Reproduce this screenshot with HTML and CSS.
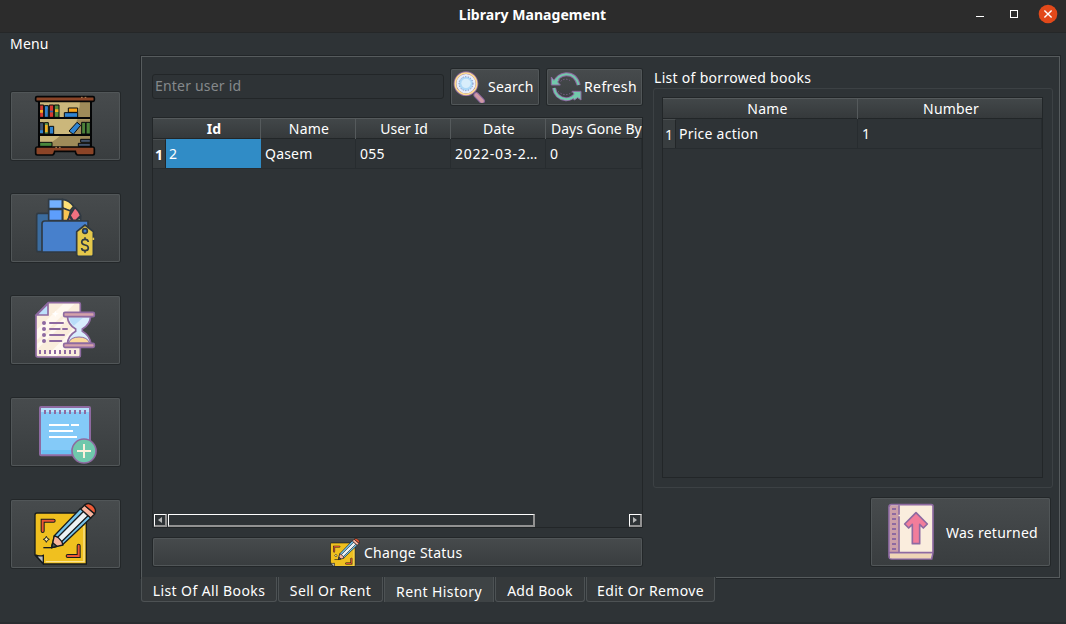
FILE: index.html
```html
<!DOCTYPE html>
<html lang="en">
<head>
<meta charset="utf-8">
<title>Library Management</title>
<link rel="stylesheet" href="styles.css">
</head>
<body>
<header class="titlebar">
  <h1 class="title">Library Management</h1>
  <div class="window-controls">
    <svg width="88" height="33" viewBox="0 0 88 33">
      <path d="M4 16.5h8" stroke="#fff"/>
      <rect x="38.5" y="10.500" width="7" height="7" fill="none" stroke="#fff"/>
      <circle cx="76" cy="14" r="9.300" fill="#e2491a"/>
      <path d="M72.400 10.400l7.200 7.200m0-7.200l-7.200 7.200" stroke="#fff" stroke-width="1.400"/>
    </svg>
  </div>
</header>
<div class="content">
  <aside class="sidebar">
    <div class="menu-label"><span class="t-menu">Menu</span></div>
    <nav class="menu">
      <button class="btn menu-btn" aria-label="Books">
        <svg width="109" height="68" viewBox="33 36 327 204">
          <path d="M117 62h156v142H117z" fill="#cbb77b"/>
          <path d="M240 65h31v49h-43q11-22 12-49zM232 118h39v45h-61q15-22 22-45zM180 167h91v33H122q35-10 58-33z" fill="#9f8b59"/>
          <g stroke="#080a0c" stroke-width="3">
            <path d="M119 75h12v37h-12z" fill="#d63a2f"/><path d="M133 77h12v35h-12z" fill="#3583c9"/><path d="M148 75h13v37h-13z" fill="#d63a2f"/><path d="M163 75h14v37h-14z" fill="#538b3c"/>
            <path d="M205 84h28v13h-28z" fill="#f9a61c"/><path d="M193 98h40v14h-40z" fill="#2f83d0"/>
            <path d="M119 128h12v34h-12z" fill="#43536b"/><path d="M133 128h12v34h-12z" fill="#65994a"/><path d="M148 139h13v23h-13z" fill="#2f83d0"/>
            <path d="M207 153l24-26 11 9-22 27z" fill="#2f83d0"/><path d="M245 127h12v35h-12zM258 127h13v35h-13z" fill="#4c823a"/>
            <path d="M119 187h37v12h-37z" fill="#48873d"/><path d="M242 178h29v9h-29zM235 190h36v9h-36z" fill="#43536b"/>
          </g>
          <path d="M120 90h9v8h-9zM165 88h10v8h-10zM135 135h8v21h-8z" fill="#f4af21"/>
          <path d="M135 81h8v7h-8zM120 151h9v8h-9z" fill="#2f83d0"/><path d="M150 92h9v5h-9z" fill="#315f9d"/>
          <path d="M117 60v142M273 60v142M116 114h158M116 165h158" stroke="#050607" stroke-width="6"/>
          <rect x="107" y="50" width="176" height="14" rx="4" fill="#8b4427" stroke="#050607" stroke-width="5"/>
          <path d="M111 201h168q4 0 4 5v14q0 5-5 5h-45q-5 0-7-11h-62q-2 11-7 11h-45q-5 0-5-5v-14q0-5 4-5z" fill="#8b4427" stroke="#050607" stroke-width="5"/>
          <path d="M243 52h5m6 0h5M166 202h5m6 0h5" stroke="#b88a5c" stroke-width="3"/>
        </svg>
      </button>
      <button class="btn menu-btn" aria-label="Sell">
        <svg width="109" height="68" viewBox="33 27 327 204">
          <g stroke="#303a43" stroke-width="5" stroke-linejoin="round">
            <path d="M115 85h40v115h-40q-5 0-5-6V91q0-6 5-6z" fill="#3b6c9f"/>
            <path d="M227 107l15-13v13z" fill="#72c886"/>
            <path d="M188 43q20 2 33 21l-12 15-21-10z" fill="#fee077"/>
            <path d="M188 69l24 9-8 29h-16z" fill="#f8c354"/>
            <path d="M202 107l7-13 8 13z" fill="#e0526c"/>
            <path d="M210 91l15-24q14 13 17 25l-14 14h-9z" fill="#ef7180"/>
            <path d="M146 43h41v28h-41z" fill="#73b0ff"/>
            <path d="M146 73h41v34h-41z" fill="#5d9efc"/>
            <path d="M134 108h130v93H126v-85q0-8 8-8z" fill="#4780cc"/>
            <path d="M255 120l25 20v68q0 6-6 6h-38q-6 0-6-6v-68z" fill="#e5c84b"/>
            <circle cx="255" cy="138" r="7" fill="#4780cc"/>
          </g>
          <path d="M265 171q-1-8-10-8t-10 8q0 7 10 9 10 2 10 9 0 8-10 8t-10-8M255 157v7m0 32v7" fill="none" stroke="#303a43" stroke-width="5"/>
          <path d="M280 158v7" stroke="#e5c84b" stroke-width="5"/>
        </svg>
      </button>
      <button class="btn menu-btn" aria-label="Rent history">
        <svg width="109" height="68" viewBox="33 33 327 204">
          <path d="M145 53h92q5 0 5 5v154q0 5-5 5H113q-5 0-5-5V90z" fill="#faeddc"/>
          <path d="M190 56h34L110 166v-32zM239 112v29l-68 72h-31zM112 192l87-84-7-9-80 77z" fill="#fff8ef"/>
          <path d="M166 77l3 7 8 2-8 3-3 7-3-7-8-3 8-2z" fill="#fff"/>
          <path d="M145 53h92q4 0 4 5v153q0 5-5 5H113q-5 0-5-5V90z" fill="none" stroke="#8e6aa1" stroke-width="5" stroke-linejoin="round"/>
          <path d="M144 56v34h-34z" fill="#bde0fb" stroke="#8e6aa1" stroke-width="5"/>
          <path d="M150 114h39M150 132h29m10 0h12M150 150h42M150 168h34" stroke="#8e6aa1" stroke-width="6" stroke-linecap="round"/>
          <g fill="#8e6aa1"><circle cx="132" cy="114" r="6"/><circle cx="132" cy="132" r="6"/><circle cx="132" cy="150" r="6"/><circle cx="132" cy="168" r="6"/></g>
          <path d="M117 201h114" stroke="#8e6aa1" stroke-width="12" stroke-dasharray="6 9"/>
          <path d="M202 94h70q-2 25-25 38v7q22 12 26 38h-71q2-25 25-38v-7q-23-13-25-38z" fill="#d8edfd" stroke="#8e6aa1" stroke-width="5"/>
          <path d="M207 98h42l-28 24q-11-11-14-24z" fill="#b9ddfa"/>
          <path d="M205 174q7-18 32-18t32 18z" fill="#fbd99b" stroke="#8e6aa1" stroke-width="3"/>
          <rect x="191" y="82" width="92" height="13" rx="4" fill="#d4a2aa" stroke="#8e6aa1" stroke-width="5"/>
          <rect x="191" y="175" width="92" height="12" rx="4" fill="#d4a2aa" stroke="#8e6aa1" stroke-width="5"/>
        </svg>
      </button>
      <button class="btn menu-btn" aria-label="Add book">
        <svg width="109" height="68" viewBox="33 24 327 204">
          <rect x="120" y="51" width="150" height="145" rx="3" fill="#84caf8"/>
          <path d="M122 53h146v13H122z" fill="#b4e0fb"/><path d="M125 180h142v12H125z" fill="#6bc0f3"/>
          <rect x="120" y="51" width="150" height="145" rx="3" fill="none" stroke="#8e6aa1" stroke-width="6"/>
          <path d="M132 66h128" stroke="#8e6aa1" stroke-width="12" stroke-dasharray="6 9"/>
          <path d="M147 105h60m6 0h24M147 123h72M147 141h84" stroke="#fff" stroke-width="6"/>
          <circle cx="252" cy="183" r="36" fill="#6fc8ac" stroke="#8e6aa1" stroke-width="5"/>
          <path d="M252 162v42m-21-21h42" stroke="#fcf0dc" stroke-width="6"/>
        </svg>
      </button>
      <button class="btn menu-btn" aria-label="Edit">
        <svg width="109" height="68" viewBox="33 30 327 204">
          <g id="edit-note">
            <path d="M111 69h143q5 0 5 5v148H130l-25-27V75q0-6 6-6z" fill="#f0c01f" stroke="#171b1d" stroke-width="4"/>
            <path d="M252 108v107H137" fill="none" stroke="#fbe493" stroke-width="4"/>
            <path d="M106 195q14 5 24 1v25z" fill="#b9bdc1" stroke="#171b1d" stroke-width="4"/>
            <path d="M128 123V92h33M236 167v31h-33" fill="none" stroke="#171b1d" stroke-width="12" stroke-linecap="round"/>
            <path d="M128 123V92h33M236 167v31h-33" fill="none" stroke="#ed5734" stroke-width="6" stroke-linecap="round"/>
            <path d="M139 139l3 6 6 3-6 3-3 6-3-6-6-3 6-3z" fill="#fff0ae" stroke="#171b1d" stroke-width="3"/>
            <path d="M130 173h27" stroke="#171b1d" stroke-width="4"/>
            <g stroke="#171b1d" stroke-width="4" stroke-linejoin="round">
              <path d="M155 173l8-36 79-82 31 28-83 79z" fill="#76c4ec"/>
              <path d="M171 144l80-80 13 13-81 80z" fill="#ecf1f4"/>
              <path d="M155 173l8-36 12 6 10 11 4 11z" fill="#f9b39d"/>
              <path d="M155 173l3-15 13 11z" fill="#50575a"/>
              <path d="M242 57l12-12 30 27-12 12z" fill="#f9b39d"/>
              <path d="M253 46q11-11 24 0l5 5q8 11 2 20z" fill="#ef5a36"/>
            </g>
          </g>
        </svg>
      </button>
    </nav>
  </aside>
  <main class="main">
    <div class="pane">
      <section class="left">
        <div class="search-row">
          <div class="input"><span class="t-input">Enter user id</span></div>
          <button class="btn tool search">
            <svg width="32" height="32" viewBox="0 0 96 96">
              <path d="M70 72l17 18" stroke="#8e6aa1" stroke-width="17" stroke-linecap="round"/><path d="M70 72l17 18" stroke="#cf99a4" stroke-width="11" stroke-linecap="round"/>
              <circle cx="39" cy="38" r="33" fill="#e6edfb" stroke="#8e6aa1" stroke-width="8"/>
              <circle cx="39" cy="38" r="32" fill="none" stroke="#ffdd92" stroke-width="5"/>
              <circle cx="39" cy="38" r="21" fill="#add8f7" stroke="#777db5" stroke-width="3" stroke-dasharray="3 5"/>
              <circle cx="39" cy="37" r="14" fill="#d8edfb"/>
            </svg><span class="t-search">Search</span>
          </button>
          <button class="btn tool refresh">
            <svg width="32" height="32" viewBox="0 0 96 96">
              <g fill="none" stroke="#8e6aa1" stroke-width="12"><path d="M14 36Q22 13 48 10q29-1 38 32M12 51q5 30 36 34 20 0 33-20"/></g>
              <path d="M4 18v24h27l-8-9 5-7-9-5-7 7zM66 61h27v26l-10-7-10 7-6-8 8-7z" fill="#72c9ac" stroke="#8e6aa1" stroke-width="3"/>
              <g fill="none" stroke="#72c9ac" stroke-width="6"><path d="M14 36Q22 13 48 10q29-1 38 32M12 51q5 30 36 34 20 0 33-20"/></g>
              <path d="M32 31q15-13 31 0M24 61q23 20 45 0" fill="none" stroke="#80618f" stroke-width="3" stroke-dasharray="4 5"/>
            </svg><span class="t-refresh">Refresh</span>
          </button>
        </div>
        <div class="table history">
          <div class="row head"><div class="cell num"></div><div class="cell"><b class="t-id">Id</b></div><div class="cell"><span class="t-name">Name</span></div><div class="cell"><span class="t-uid">User Id</span></div><div class="cell"><span class="t-date">Date</span></div><div class="cell clipped"><span class="t-days">Days Gone By</span></div></div>
          <div class="row body"><div class="cell num"><b>1</b></div><div class="cell selected">2</div><div class="cell"><span class="t-qasem">Qasem</span></div><div class="cell"><span class="t-055">055</span></div><div class="cell"><span class="t-when">2022-03-2…</span></div><div class="cell">0</div></div>
          <div class="scroll"><div class="arrow"><svg width="4" height="6"><path d="M4 0v6L0 3z" fill="#b7b8b8"/></svg></div><div class="thumb"></div><div class="arrow right"><svg width="4" height="6"><path d="M0 0v6l4-3z" fill="#b7b8b8"/></svg></div></div>
        </div>
        <button class="btn status"><svg width="30" height="30" viewBox="102 38 188 188"><use href="#edit-note"/></svg><span class="t-status">Change Status</span></button>
      </section>
      <section class="right-side">
        <div class="group-title"><span class="t-group">List of borrowed books</span></div>
        <div class="group">
          <div class="table borrowed">
            <div class="row head"><div class="cell num"></div><div class="cell"><span class="t-name">Name</span></div><div class="cell"><span class="t-number">Number</span></div></div>
            <div class="row body"><div class="cell num">1</div><div class="cell first"><span class="t-price">Price action</span></div><div class="cell">1</div></div>
          </div>
        </div>
        <button class="btn returned">
          <svg width="50" height="60" viewBox="318 96 150 180">
            <path d="M334 104h120q5 0 5 5v138l-4 20H335q-8 0-8-9V112q0-8 7-8z" fill="#faeddd" stroke="#8e6aa1" stroke-width="5"/>
            <path d="M330 107h26v140h-26z" fill="#cca0a8"/><path d="M330 250h123v15H330z" fill="#efd5b6"/>
            <path d="M327 248h132M357 106v28m0 5v108" stroke="#8e6aa1" stroke-width="5"/>
            <path d="M342 114v126" stroke="#8e6aa1" stroke-width="12" stroke-dasharray="6 9"/>
            <path d="M408 128l34 34-12 12-11-11v58h-22v-58l-11 11-12-12z" fill="#f27d9b" stroke="#8e6aa1" stroke-width="5" stroke-linejoin="round"/>
          </svg><span class="t-returned">Was returned</span>
        </button>
      </section>
    </div>
    <div class="tabs">
      <div class="tab tab-list"><span class="t-tab1">List Of All Books</span></div>
      <div class="tab tab-sell"><span class="t-tab2">Sell Or Rent</span></div>
      <div class="tab active tab-rent"><span class="t-tab3">Rent History</span></div>
      <div class="tab tab-add"><span class="t-tab4">Add Book</span></div>
      <div class="tab tab-edit"><span class="t-tab5">Edit Or Remove</span></div>
    </div>
  </main>
</div>
</body>
</html>
```
FILE: styles.css
```css
* { box-sizing: border-box; }
body { margin: 0; width: 1066px; height: 624px; overflow: hidden; background: #2e3336; color: #fff; font: 14px/20px "Noto Sans", "Open Sans", sans-serif; white-space: nowrap; }
button { font: inherit; color: inherit; padding: 0; border: 0; }
svg { display: block; flex: none; }
span, b { flex: none; }
.titlebar { height: 33px; background: #2c2c2c; border-bottom: 1px solid #252728; display: grid; grid-template-columns: 88px 1fr 88px; padding-left: 5px; padding-right: 6px; }
.title { grid-column: 2; margin: 0; padding-top: 5px; text-align: center; font-size: 14px; line-height: 20px; font-weight: 700; letter-spacing: .05px; }
.window-controls { width: 88px; }
.content { display: flex; height: 591px; border-bottom: 2px solid #292d30; }
.sidebar { width: 141px; flex: none; padding-left: 11px; }
.menu-label { height: 59px; margin-left: -1px; padding-top: 1px; }
.menu { display: grid; gap: 34px; width: 109px; }
.btn { display: flex; align-items: center; border-radius: 2px; background: linear-gradient(#474b4d, #393d3f); box-shadow: inset 0 0 0 1px #515658, 0 0 0 1px #232729; }
.menu-btn { width: 109px; height: 68px; }
.main { width: 919px; padding-top: 23px; }
.pane { height: 522px; border: 1px solid #565b5d; outline: 1px solid #222629; display: flex; padding: 12px 6px 0 10px; }
.left { width: 491px; flex: none; }
.search-row { display: flex; height: 36px; align-items: center; }
.input { width: 292px; height: 25px; border: 1px solid #222628; border-radius: 3px; padding: 1px 0 0 2px; color: #85898b; margin: 0 7px 1px 0; display: flex; line-height: 20px; }
.tool { height: 36px; padding-left: 2px; }
.search { width: 88px; margin-right: 8px; gap: 3px; }
.refresh { width: 95px; padding-left: 3px; gap: 2px; }
.table { border: 1px solid #222628; display: flex; flex-direction: column; }
.history { width: 491px; height: 411px; margin-top: 12px; }
.row { display: grid; }
.history .row { grid-template-columns: 13px 95px 95px 95px 95px 1fr; }
.head { height: 21px; background: linear-gradient(#424749, #35393b); border-top: 1px solid #555a5c; border-bottom: 1px solid #222628; line-height: 20px; text-align: center; }
.head .cell { border-right: 1px solid #555a5c; padding-left: 2px; }
.head .cell.num, .head .cell:last-child { border-right: 0; }
.cell { min-width: 0; }
.head .clipped { overflow: hidden; text-align: left; padding-left: 5px; }
.body { height: 30px; border-bottom: 1px solid #272c2f; line-height: 30px; }
.body .cell { height: 29px; border-right: 1px solid #272c2f; padding-left: 4px; }
.body .first { padding-left: 3px; }
.body .cell.num { background: #383d3f; border-right: 1px solid #222628; border-top: 1px solid #4a4f51; padding: 0; text-align: center; }
.body .selected { background: #308cc6; border-right-color: #308cc6; padding-left: 3px; }
.scroll { margin-top: auto; height: 13px; display: flex; padding: 0 0 0 1px; }
.arrow, .thumb { height: 13px; border-style: solid; border-width: 1px 2px 2px 1px; border-color: #fff #929292 #929292 #fff; }
.arrow { width: 13px; display: grid; place-items: center; }
.thumb { width: 367px; margin-left: 1px; }
.arrow.right { margin-left: auto; }
.status { width: 489px; height: 28px; margin: 10px 0 0 1px; padding: 1px 0 0 177px; gap: 4px; overflow: hidden; }
.right-side { width: 400px; margin-left: 10px; }
.group-title { height: 20px; padding: 0 0 0 1px; margin-top: -1px; }
.group { width: 400px; height: 400px; border: 1px solid #3c4144; border-radius: 3px; padding: 8px; }
.borrowed { width: 381px; height: 381px; }
.borrowed .row { grid-template-columns: 13px 182px 1fr; }
.returned { width: 179px; height: 68px; margin: 10px 0 0 218px; padding-left: 15px; gap: 10px; }
.returned span { padding-top: 2px; }
.tabs { display: flex; align-items: flex-start; gap: 1px; height: 25px; margin-top: -1px; width: 575px; background: #2e3336; position: relative; }
.tab { height: 25px; background: #35393b; border: solid #4d5254; border-width: 0 1px 1px; border-radius: 0 0 3px 3px; display: flex; justify-content: center; padding-top: 4px; }
.tab.active { background: #3e4345; border-bottom: 0; border-radius: 0; padding-top: 5px; }
.tab-list { width: 136px; }
.tab-sell { width: 105px; }
.tab-rent { width: 110px; }
.tab-add { width: 90px; }
.tab-edit { width: 129px; }
.t-tab1, .t-tab3 { letter-spacing: .4px; }
.t-tab2, .t-tab5 { letter-spacing: .35px; }
.t-tab4 { letter-spacing: .3px; }
.t-group { letter-spacing: .3px; }
.t-price, .t-returned, .t-status { letter-spacing: .25px; }
.t-search { letter-spacing: .2px; }
.t-refresh { letter-spacing: .4px; }
.t-input { letter-spacing: .2px; }
.t-name, .t-date, .t-number, .t-menu { letter-spacing: .2px; }
.t-055 { letter-spacing: .3px; }
.t-qasem { letter-spacing: .2px; }
.t-when { letter-spacing: .7px; }
```
